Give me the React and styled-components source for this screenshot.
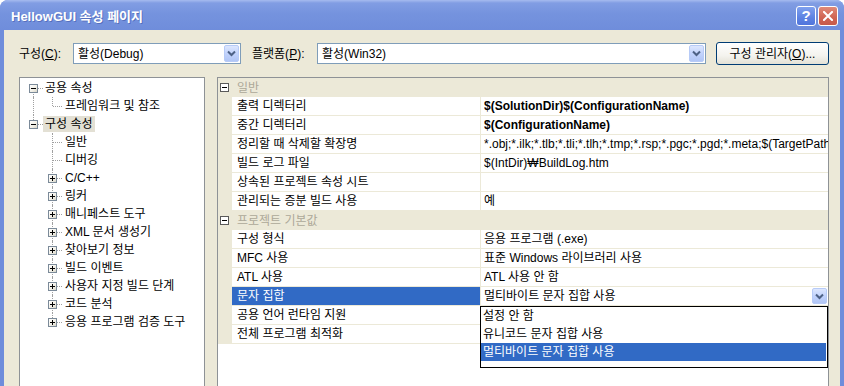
import React from 'react';
import styled, { createGlobalStyle } from 'styled-components';

const GlobalStyle = createGlobalStyle`
  html, body { margin: 0; padding: 0; background: #ffffff; overflow: hidden; }
  body {
    font-family: "Liberation Sans", "Noto Sans CJK KR", sans-serif;
    font-size: 12px;
    color: #000;
  }
  #root { width: 844px; height: 386px; overflow: hidden; }
`;

const Window = styled.div`
  width: 844px;
  height: 430px;
  display: flex;
  flex-direction: column;
  background: #6f8ddb;
  border-radius: 8px 8px 0 0;
`;

const TitleBar = styled.div`
  height: 30px;
  flex: none;
  display: flex;
  align-items: center;
  padding: 1px 6px 0 11px;
  box-sizing: border-box;
  background: linear-gradient(to bottom, #a6bbef 0%, #819de3 10%, #7593de 45%, #6f8ddb 100%);
  border-radius: 8px 8px 0 0;
`;

const TitleText = styled.div`
  flex: 1;
  color: #ffffff;
  font-size: 13px;
  font-weight: 700;
  text-shadow: 1px 1px 0 rgba(30, 50, 130, 0.35);
`;

const TitleButtons = styled.div`
  display: flex;
  gap: 2px;
`;

const TitleButton = styled.div`
  width: 20px;
  height: 20px;
  box-sizing: border-box;
  border: 1px solid #ffffff;
  border-radius: 3px;
  display: flex;
  align-items: center;
  justify-content: center;
  color: #fff;
  font-weight: 700;
  font-size: 15px;
  background: ${p => (p.$close
    ? 'linear-gradient(to bottom, #e08a78 0%, #d06452 60%, #c75a48 100%)'
    : 'linear-gradient(to bottom, #7fa0ee 0%, #5d82e2 60%, #5175dc 100%)')};
`;

const Body = styled.div`
  flex: 1;
  margin: 0 4px;
  background: #ece9d8;
  padding: 12px 11px 0 15px;
  display: flex;
  flex-direction: column;
  gap: 12px;
  min-height: 0;
  min-width: 0;
`;

const Toolbar = styled.div`
  height: 23px;
  display: flex;
  align-items: center;
  flex: none;
`;

const Label = styled.div`
  width: ${p => p.$w}px;
  margin-left: ${p => p.$ml || 0}px;
  flex: none;
  white-space: nowrap;
  line-height: 16px;
`;

const U = styled.span`
  text-decoration: underline;
`;

const Combo = styled.div`
  height: 21px;
  box-sizing: border-box;
  border: 1px solid #7f9db9;
  background: #ffffff;
  display: flex;
  align-items: center;
  padding-left: 4px;
  width: ${p => (p.$w ? `${p.$w}px` : 'auto')};
  flex: ${p => (p.$w ? 'none' : '1')};
  min-width: 0;
  line-height: 16px;
`;

const ComboText = styled.div`
  flex: 1;
  white-space: nowrap;
`;

const ArrowButton = styled.div`
  width: 15px;
  height: ${p => p.$h || 17}px;
  margin-right: 1px;
  box-sizing: border-box;
  border: 1px solid #b7cbf7;
  border-radius: 2px;
  background: linear-gradient(to bottom, #dde7fe 0%, #c2d3fc 50%, #b1c6f6 100%);
  display: flex;
  align-items: center;
  justify-content: center;
  flex: none;
`;

const PushButton = styled.div`
  width: 113px;
  height: 23px;
  margin-left: 10px;
  box-sizing: border-box;
  border: 1px solid #003c74;
  border-radius: 3px;
  background: linear-gradient(to bottom, #ffffff 0%, #f4f3ee 60%, #e3e1d6 100%);
  display: flex;
  align-items: center;
  justify-content: center;
  flex: none;
  line-height: 16px;
`;

const Panels = styled.div`
  flex: 1;
  display: flex;
  gap: 12px;
  min-height: 0;
  min-width: 0;
`;

const TreePanel = styled.div`
  width: 186px;
  flex: none;
  box-sizing: border-box;
  border: 1px solid #8e9296;
  background: #ffffff;
  padding: 1px 0 0 4px;
  overflow: hidden;
`;

const TreeRow = styled.div`
  height: 18px;
  display: flex;
  align-items: center;
`;

const Guide = styled.div`
  width: 19px;
  height: 18px;
  flex: none;
  position: relative;
  &::before {
    content: '';
    display: ${p => (p.$v ? 'block' : 'none')};
    position: absolute;
    left: 9px;
    top: ${p => (p.$v === 'bottom' ? '9px' : '0')};
    bottom: ${p => (p.$v === 'top' ? '9px' : '0')};
    border-left: 1px dotted #a0a0a0;
  }
  &::after {
    content: '';
    display: ${p => (p.$h ? 'block' : 'none')};
    position: absolute;
    left: 10px;
    right: 0;
    top: 9px;
    border-top: 1px dotted #a0a0a0;
  }
`;

const ExpandBox = styled.div`
  position: absolute;
  left: 5px;
  top: 5px;
  width: 9px;
  height: 9px;
  box-sizing: border-box;
  border: 1px solid #7b8a99;
  background: linear-gradient(135deg, #ffffff 0%, #f1efe6 60%, #d8d5c8 100%);
  z-index: 1;
  &::before {
    content: '';
    position: absolute;
    left: 1px;
    top: 3px;
    width: 5px;
    height: 1px;
    background: #000;
  }
  &::after {
    content: '';
    display: ${p => (p.$plus ? 'block' : 'none')};
    position: absolute;
    left: 3px;
    top: 1px;
    width: 1px;
    height: 5px;
    background: #000;
  }
`;

const TreeLabel = styled.div`
  margin-left: ${p => (p.$level === 0 ? 0 : 1)}px;
  padding: 0 2px;
  line-height: 16px;
  white-space: nowrap;
  background: ${p => (p.$selected ? '#e3e0d4' : 'transparent')};
`;

const GridPanel = styled.div`
  flex: 1;
  min-width: 0;
  box-sizing: border-box;
  border: 1px solid #8e9296;
  background: #ffffff;
  display: flex;
  flex-direction: column;
`;

const CategoryRow = styled.div`
  height: 19px;
  flex: none;
  display: flex;
  align-items: center;
  background: #ece9d8;
`;

const CategoryBox = styled.div`
  width: 9px;
  height: 9px;
  margin-left: 2px;
  box-sizing: border-box;
  border: 1px solid #5a5a5a;
  background: #ffffff;
  position: relative;
  flex: none;
  &::before {
    content: '';
    position: absolute;
    left: 1px;
    top: 3px;
    width: 5px;
    height: 1px;
    background: #000;
  }
`;

const CategoryText = styled.div`
  margin-left: 8px;
  color: #aca899;
  line-height: 16px;
  white-space: nowrap;
`;

const PropRow = styled.div`
  height: 19px;
  flex: none;
  display: flex;
  min-width: 0;
`;

const Margin = styled.div`
  width: 14px;
  flex: none;
  background: #ece9d8;
`;

const NameCell = styled.div`
  width: 249px;
  flex: none;
  box-sizing: border-box;
  border-right: 1px solid #ece9d8;
  border-bottom: 1px solid #ece9d8;
  padding-left: 5px;
  display: flex;
  align-items: center;
  white-space: nowrap;
  overflow: hidden;
  line-height: 16px;
  background: ${p => (p.$selected ? '#316ac5' : '#ffffff')};
  color: ${p => (p.$selected ? '#ffffff' : '#000000')};
`;

const ValueCell = styled.div`
  flex: 1;
  min-width: 0;
  box-sizing: border-box;
  border-bottom: 1px solid #ece9d8;
  padding-left: 3px;
  display: flex;
  align-items: center;
  position: relative;
  line-height: 16px;
  font-weight: ${p => (p.$bold ? 700 : 400)};
`;

const ValueText = styled.div`
  flex: 1;
  min-width: 0;
  white-space: nowrap;
  overflow: hidden;
`;

const DropList = styled.div`
  position: absolute;
  top: 19px;
  left: -1px;
  right: 0;
  box-sizing: border-box;
  border: 1px solid #000000;
  background: #ffffff;
  padding-bottom: 6px;
  z-index: 5;
  font-weight: 400;
`;

const DropItem = styled.div`
  height: 18px;
  display: flex;
  align-items: center;
  padding-left: 2px;
  line-height: 16px;
  white-space: nowrap;
  margin-right: 1px;
  background: ${p => (p.$selected ? '#316ac5' : 'transparent')};
  color: ${p => (p.$selected ? '#ffffff' : '#000000')};
`;

const Chevron = () => (
  <svg width="9" height="7" viewBox="0 0 9 7">
    <path d="M1 1.5 L4.5 5 L8 1.5" fill="none" stroke="#4d6185" strokeWidth="2" />
  </svg>
);

const CloseGlyph = () => (
  <svg width="10" height="10" viewBox="0 0 10 10">
    <path d="M1 1 L9 9 M9 1 L1 9" stroke="#ffffff" strokeWidth="2" strokeLinecap="square" />
  </svg>
);

const treeItems = [
  { text: '공용 속성', level: 0, box: 'minus', g0: { v: 'bottom', h: true } },
  { text: '프레임워크 및 참조', level: 1, g0: { v: 'full' }, g1: { v: 'top', h: true } },
  { text: '구성 속성', level: 0, box: 'minus', selected: true, g0: { v: 'top', h: true } },
  { text: '일반', level: 1, g1: { v: 'full', h: true } },
  { text: '디버깅', level: 1, g1: { v: 'full', h: true } },
  { text: 'C/C++', level: 1, box: 'plus', g1: { v: 'full', h: true } },
  { text: '링커', level: 1, box: 'plus', g1: { v: 'full', h: true } },
  { text: '매니페스트 도구', level: 1, box: 'plus', g1: { v: 'full', h: true } },
  { text: 'XML 문서 생성기', level: 1, box: 'plus', g1: { v: 'full', h: true } },
  { text: '찾아보기 정보', level: 1, box: 'plus', g1: { v: 'full', h: true } },
  { text: '빌드 이벤트', level: 1, box: 'plus', g1: { v: 'full', h: true } },
  { text: '사용자 지정 빌드 단계', level: 1, box: 'plus', g1: { v: 'full', h: true } },
  { text: '코드 분석', level: 1, box: 'plus', g1: { v: 'full', h: true } },
  { text: '응용 프로그램 검증 도구', level: 1, box: 'plus', g1: { v: 'top', h: true } },
];

const gridData = [
  {
    category: '일반',
    rows: [
      { name: '출력 디렉터리', value: '$(SolutionDir)$(ConfigurationName)', bold: true },
      { name: '중간 디렉터리', value: '$(ConfigurationName)', bold: true },
      { name: '정리할 때 삭제할 확장명', value: '*.obj;*.ilk;*.tlb;*.tli;*.tlh;*.tmp;*.rsp;*.pgc;*.pgd;*.meta;$(TargetPath)' },
      { name: '빌드 로그 파일', value: '$(IntDir)₩BuildLog.htm' },
      { name: '상속된 프로젝트 속성 시트', value: '' },
      { name: '관리되는 증분 빌드 사용', value: '예' },
    ],
  },
  {
    category: '프로젝트 기본값',
    rows: [
      { name: '구성 형식', value: '응용 프로그램 (.exe)' },
      { name: 'MFC 사용', value: '표준 Windows 라이브러리 사용' },
      { name: 'ATL 사용', value: 'ATL 사용 안 함' },
      { name: '문자 집합', value: '멀티바이트 문자 집합 사용', selected: true },
      { name: '공용 언어 런타임 지원', value: '' },
      { name: '전체 프로그램 최적화', value: '' },
    ],
  },
];

const dropOptions = ['설정 안 함', '유니코드 문자 집합 사용', '멀티바이트 문자 집합 사용'];

function TreeItem({ item }) {
  return (
    <TreeRow>
      <Guide $v={item.g0?.v} $h={item.g0?.h}>
        {item.box && item.level === 0 && <ExpandBox $plus={item.box === 'plus'} />}
      </Guide>
      {item.level === 1 && (
        <Guide $v={item.g1?.v} $h={item.g1?.h}>
          {item.box && <ExpandBox $plus={item.box === 'plus'} />}
        </Guide>
      )}
      <TreeLabel $level={item.level} $selected={item.selected}>{item.text}</TreeLabel>
    </TreeRow>
  );
}

export default function App() {
  return (
    <>
      <GlobalStyle />
      <Window>
        <TitleBar>
          <TitleText>HellowGUI 속성 페이지</TitleText>
          <TitleButtons>
            <TitleButton>?</TitleButton>
            <TitleButton $close><CloseGlyph /></TitleButton>
          </TitleButtons>
        </TitleBar>
        <Body>
          <Toolbar>
            <Label $w={54}>구성(<U>C</U>):</Label>
            <Combo $w={168}>
              <ComboText>활성(Debug)</ComboText>
              <ArrowButton><Chevron /></ArrowButton>
            </Combo>
            <Label $w={65} $ml={11}>플랫폼(<U>P</U>):</Label>
            <Combo>
              <ComboText>활성(Win32)</ComboText>
              <ArrowButton><Chevron /></ArrowButton>
            </Combo>
            <PushButton>구성 관리자(<U>O</U>)...</PushButton>
          </Toolbar>
          <Panels>
            <TreePanel>
              {treeItems.map((item, i) => (
                <TreeItem key={i} item={item} />
              ))}
            </TreePanel>
            <GridPanel>
              {gridData.map(section => (
                <React.Fragment key={section.category}>
                  <CategoryRow>
                    <CategoryBox />
                    <CategoryText>{section.category}</CategoryText>
                  </CategoryRow>
                  {section.rows.map(row => (
                    <PropRow key={row.name}>
                      <Margin />
                      <NameCell $selected={row.selected}>{row.name}</NameCell>
                      <ValueCell $bold={row.bold}>
                        <ValueText>{row.value}</ValueText>
                        {row.selected && (
                          <>
                            <ArrowButton $h={16}><Chevron /></ArrowButton>
                            <DropList>
                              {dropOptions.map(opt => (
                                <DropItem key={opt} $selected={opt === row.value}>{opt}</DropItem>
                              ))}
                            </DropList>
                          </>
                        )}
                      </ValueCell>
                    </PropRow>
                  ))}
                </React.Fragment>
              ))}
            </GridPanel>
          </Panels>
        </Body>
      </Window>
    </>
  );
}
